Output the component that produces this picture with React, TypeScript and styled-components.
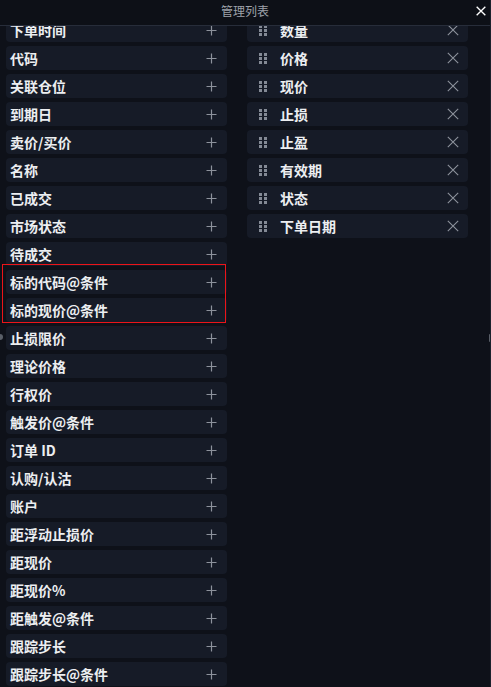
import React from "react";
import styled, { createGlobalStyle } from "styled-components";

const Global = createGlobalStyle`
  html, body { margin: 0; padding: 0; background: #0e1119; }
  body { font-family: "Noto Sans CJK SC", "Noto Sans", sans-serif; }
  * { box-sizing: border-box; }
`;

const Panel = styled.div`
  position: relative;
  width: 491px;
  height: 687px;
  background: #0e1119;
  display: flex;
  flex-direction: column;
  overflow: hidden;
  border-right: 1px solid #1c212c;
`;

const Header = styled.div`
  flex: 0 0 26px;
  height: 26px;
  display: flex;
  align-items: center;
  justify-content: center;
  position: relative;
  background: #0d1017;
  border-bottom: 1px solid #272d3a;
  z-index: 2;
`;

const Title = styled.div`
  font-size: 12px;
  color: #9ea2aa;
  line-height: 1;
  margin-top: -4px;
`;

const CloseBtn = styled.button`
  position: absolute;
  right: 3px;
  top: 5px;
  width: 12px;
  height: 12px;
  padding: 0;
  border: 0;
  background: none;
  display: flex;
  align-items: center;
  justify-content: center;
`;

const Body = styled.div`
  flex: 1;
  overflow: hidden;
  display: flex;
  gap: 20px;
  padding-left: 6px;
  align-items: flex-start;
`;

const Column = styled.div`
  width: 221px;
  display: flex;
  flex-direction: column;
  gap: 4px;
  margin-top: -8px;
`;

const Row = styled.div<{ $pl: number; $pr: number }>`
  height: 24px;
  border-radius: 4px;
  background: #161b27;
  display: flex;
  align-items: center;
  padding-left: ${(p) => p.$pl}px;
  padding-right: ${(p) => p.$pr}px;
  color: #eceef1;
  font-size: 14px;
  font-weight: 700;
  white-space: nowrap;
`;

const Label = styled.span`
  flex: 1;
  line-height: 1;
`;

const Group = styled.div`
  position: relative;
  display: flex;
  flex-direction: column;
  gap: 4px;
  &::after {
    content: "";
    position: absolute;
    left: -4px;
    right: 1px;
    top: -6px;
    bottom: -1px;
    border: 1px solid #ec1419;
    pointer-events: none;
    z-index: 1;
  }
`;

const Handle = styled.div<{ $side: "left" | "right" }>`
  position: absolute;
  top: 334px;
  ${(p) => (p.$side === "left" ? "left: -3px;" : "right: -1px;")}
  width: ${(p) => (p.$side === "left" ? 6 : 2)}px;
  height: ${(p) => (p.$side === "left" ? 6 : 8)}px;
  border-radius: 3px;
  background: #5a5f68;
  z-index: 3;
`;

const Grip = styled.div`
  display: grid;
  grid-template-columns: repeat(2, 3px);
  grid-auto-rows: 3px;
  column-gap: 2px;
  row-gap: 1px;
  width: 21px;
  & > i {
    display: block;
    background: #848a95;
  }
`;

const Plus = () => (
  <svg width="11" height="11" viewBox="0 0 11 11">
    <path d="M5.5 0.5v10M0.5 5.5h10" stroke="#8d929c" strokeWidth="1.2" />
  </svg>
);

const Cross = ({ size = 12, color = "#8d929c", w = 1.1 }: { size?: number; color?: string; w?: number }) => (
  <svg width={size} height={size} viewBox="0 0 12 12">
    <path d="M0.8 0.8L11.2 11.2M11.2 0.8L0.8 11.2" stroke={color} strokeWidth={w} />
  </svg>
);

const left = [
  "下单时间",
  "代码",
  "关联仓位",
  "到期日",
  "卖价/买价",
  "名称",
  "已成交",
  "市场状态",
  "待成交",
];
const grouped = ["标的代码@条件", "标的现价@条件"];
const leftRest = [
  "止损限价",
  "理论价格",
  "行权价",
  "触发价@条件",
  "订单 ID",
  "认购/认沽",
  "账户",
  "距浮动止损价",
  "距现价",
  "距现价%",
  "距触发@条件",
  "跟踪步长",
  "跟踪步长@条件",
];
const right = ["数量", "价格", "现价", "止损", "止盈", "有效期", "状态", "下单日期"];

const AvailRow = ({ label }: { label: string }) => (
  <Row $pl={4} $pr={10}>
    <Label>{label}</Label>
    <Plus />
  </Row>
);

const SelRow = ({ label }: { label: string }) => (
  <Row $pl={12} $pr={9}>
    <Grip>
      {Array.from({ length: 6 }).map((_, i) => (
        <i key={i} />
      ))}
    </Grip>
    <Label>{label}</Label>
    <Cross />
  </Row>
);

export default function App() {
  return (
    <>
      <Global />
      <Panel>
        <Header>
          <Title>管理列表</Title>
          <CloseBtn aria-label="close">
            <Cross size={10} color="#ffffff" w={1.6} />
          </CloseBtn>
        </Header>
        <Handle $side="left" />
        <Handle $side="right" />
        <Body>
          <Column>
            {left.map((l) => (
              <AvailRow key={l} label={l} />
            ))}
            <Group>
              {grouped.map((l) => (
                <AvailRow key={l} label={l} />
              ))}
            </Group>
            {leftRest.map((l) => (
              <AvailRow key={l} label={l} />
            ))}
          </Column>
          <Column>
            {right.map((l) => (
              <SelRow key={l} label={l} />
            ))}
          </Column>
        </Body>
      </Panel>
    </>
  );
}
